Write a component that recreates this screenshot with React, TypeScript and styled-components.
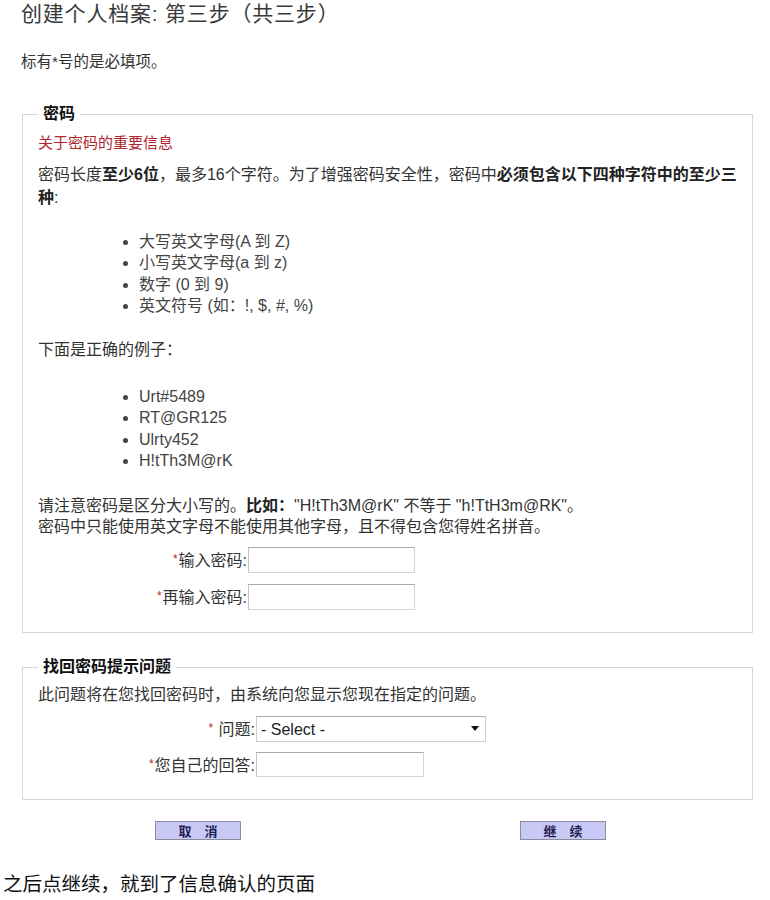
import React from 'react';
import styled, { createGlobalStyle } from 'styled-components';

const GlobalStyle = createGlobalStyle`
  html, body {
    margin: 0;
    padding: 0;
    background: #fff;
  }
  body {
    font-family: "Liberation Sans", Arial, "Noto Sans CJK SC", sans-serif;
    color: #333;
  }
`;

const Page = styled.div`
  width: 770px;
`;

const Form = styled.div`
  padding: 0 0 0 22px;
`;

const Title = styled.h1`
  margin: 0;
  font-size: 21px;
  line-height: 28px;
  font-weight: normal;
  color: #3a3a3a;
  letter-spacing: 0.8px;
  margin-left: -1px;
`;

const Intro = styled.p`
  margin: 23px 0 0 -1px;
  font-size: 15.5px;
  line-height: 22px;
`;

const Fieldset = styled.fieldset<{ $top: number; $padTop: number }>`
  box-sizing: border-box;
  width: 731px;
  margin: ${(p) => p.$top}px 0 0 0;
  padding: ${(p) => p.$padTop}px 15px 22px 15px;
  border: 1px solid #d6d6d6;
  min-inline-size: 0;
`;

const Legend = styled.legend`
  padding: 0 5px;
  margin: 0;
  font-size: 16px;
  line-height: 22px;
  font-weight: bold;
  color: #111;
`;

const Notice = styled.p`
  margin: 0;
  font-size: 15px;
  line-height: 22px;
  color: #b0262c;
`;

const Para = styled.p<{ $top: number; $lh: number }>`
  margin: ${(p) => p.$top}px 0 0 0;
  font-size: 16px;
  line-height: ${(p) => p.$lh}px;
  color: #333;
`;

const Strong = styled.span`
  font-weight: bold;
  color: #222;
`;

const List = styled.ul<{ $top: number }>`
  margin: ${(p) => p.$top}px 0 0 0;
  padding-left: 101px;
  list-style: disc;
  font-size: 16px;
  line-height: 21.5px;
  color: #444;
`;

const Row = styled.div<{ $label: number; $top: number }>`
  display: grid;
  grid-template-columns: ${(p) => p.$label}px auto;
  column-gap: 1px;
  align-items: center;
  margin-top: ${(p) => p.$top}px;
`;

const Label = styled.label`
  text-align: right;
  font-size: 16px;
  line-height: 22px;
  color: #333;
  white-space: nowrap;
`;

const Req = styled.span`
  color: #b0262c;
  font-size: 12px;
  vertical-align: 3px;
  margin-right: 1px;
`;

const TextInput = styled.input<{ $w: number; $h: number }>`
  box-sizing: border-box;
  width: ${(p) => p.$w}px;
  height: ${(p) => p.$h}px;
  margin: 0;
  padding: 2px 4px;
  border: 1px solid #d4d4d4;
  border-top-color: #a9a9a9;
  border-left-color: #c4c4c4;
  background: #fff;
  font: inherit;
`;

const SelectBox = styled.div`
  position: relative;
  width: 230px;
  height: 26px;
`;

const Select = styled.select`
  box-sizing: border-box;
  width: 100%;
  height: 100%;
  margin: 0;
  padding: 0 20px 0 4px;
  appearance: none;
  border: 1px solid #cfcfcf;
  border-top-color: #a9a9a9;
  background: #fff;
  border-radius: 0;
  font-family: "Liberation Sans", Arial, sans-serif;
  font-size: 16px;
  color: #222;
`;

const Caret = styled.svg`
  position: absolute;
  right: 7px;
  top: 10px;
  pointer-events: none;
`;

const ButtonRow = styled.div`
  display: flex;
  gap: 279px;
  margin-top: 21px;
  padding-left: 133px;
`;

const Button = styled.button`
  box-sizing: border-box;
  width: 86px;
  height: 19px;
  padding: 0;
  border: 1px solid #8c8ca0;
  background: #c9c9f6;
  color: #1e1e50;
  font-family: "Noto Sans CJK SC", sans-serif;
  font-size: 13px;
  line-height: 17px;
  font-weight: bold;
  cursor: pointer;
`;

const Caption = styled.p`
  margin: 31px 0 0 3px;
  font-family: "Liberation Serif", "Noto Sans CJK SC", serif;
  font-size: 19.5px;
  line-height: 28px;
  color: #111;
`;

const rules = ['大写英文字母(A 到 Z)', '小写英文字母(a 到 z)', '数字 (0 到 9)', '英文符号 (如：!, $, #, %)'];
const samples = ['Urt#5489', 'RT@GR125', 'Ulrty452', 'H!tTh3M@rK'];

export default function App() {
  return (
    <Page>
      <GlobalStyle />
      <Form>
        <Title>创建个人档案: 第三步（共三步）</Title>
        <Intro>标有*号的是必填项。</Intro>

        <Fieldset $top={30} $padTop={7}>
          <Legend>密码</Legend>
          <Notice>关于密码的重要信息</Notice>
          <Para $top={9} $lh={23}>
            密码长度<Strong>至少6位</Strong>，最多16个字符。为了增强密码安全性，密码中
            <Strong>必须包含以下四种字符中的至少三种</Strong>:
          </Para>
          <List $top={21.5}>
            {rules.map((r) => (
              <li key={r}>{r}</li>
            ))}
          </List>
          <Para $top={22.5} $lh={22}>下面是正确的例子：</Para>
          <List $top={24.5}>
            {samples.map((s) => (
              <li key={s}>{s}</li>
            ))}
          </List>
          <Para $top={23} $lh={21}>
            请注意密码是区分大小写的。<Strong>比如：</Strong>"H!tTh3M@rK" 不等于 "h!TtH3m@RK"。
            <br />
            密码中只能使用英文字母不能使用其他字母，且不得包含您得姓名拼音。
          </Para>
          <Row $label={209} $top={10.5}>
            <Label htmlFor="pw1">
              <Req>*</Req>输入密码:
            </Label>
            <TextInput id="pw1" type="password" $w={167} $h={26} />
          </Row>
          <Row $label={209} $top={11}>
            <Label htmlFor="pw2">
              <Req>*</Req>再输入密码:
            </Label>
            <TextInput id="pw2" type="password" $w={167} $h={26} />
          </Row>
        </Fieldset>

        <Fieldset $top={23} $padTop={6}>
          <Legend>找回密码提示问题</Legend>
          <Para $top={0} $lh={22}>此问题将在您找回密码时，由系统向您显示您现在指定的问题。</Para>
          <Row $label={217} $top={10}>
            <Label htmlFor="q">
              <Req>*</Req> 问题:
            </Label>
            <SelectBox>
              <Select id="q" defaultValue="">
                <option value="">- Select -</option>
              </Select>
              <Caret width="8" height="5" viewBox="0 0 8 5">
                <path d="M0 0 L8 0 L4 5 Z" fill="#111" />
              </Caret>
            </SelectBox>
          </Row>
          <Row $label={217} $top={10}>
            <Label htmlFor="ans">
              <Req>*</Req>您自己的回答:
            </Label>
            <TextInput id="ans" type="text" $w={168} $h={25} />
          </Row>
        </Fieldset>

        <ButtonRow>
          <Button type="button">取　消</Button>
          <Button type="button">继　续</Button>
        </ButtonRow>
      </Form>
      <Caption>之后点继续，就到了信息确认的页面</Caption>
    </Page>
  );
}
